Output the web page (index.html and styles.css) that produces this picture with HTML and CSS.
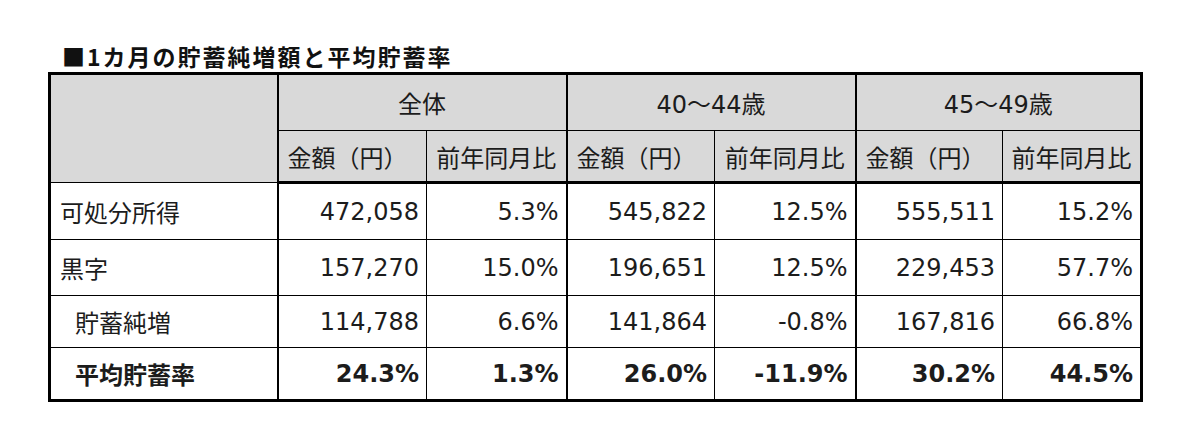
FILE: index.html
```html
<!DOCTYPE html>
<html lang="ja">
<head>
<meta charset="utf-8">
<title>1カ月の貯蓄純増額と平均貯蓄率</title>
<link rel="stylesheet" href="styles.css">
</head>
<body>
<div class="page">
  <h1 class="title">■1カ月の貯蓄純増額と平均貯蓄率</h1>
  <table class="stats">
    <colgroup>
      <col class="c-label">
      <col class="c-amt1"><col class="c-pct1">
      <col class="c-amt2"><col class="c-pct2">
      <col class="c-amt3"><col class="c-pct3">
    </colgroup>
    <thead>
      <tr class="hrow1">
        <th class="corner" rowspan="2"></th>
        <th class="grp" colspan="2">全体</th>
        <th class="grp" colspan="2">40～44歳</th>
        <th class="grp" colspan="2">45～49歳</th>
      </tr>
      <tr class="hrow2">
        <th class="amt grp-start">金額（円）</th>
        <th class="pct">前年同月比</th>
        <th class="amt grp-start">金額（円）</th>
        <th class="pct">前年同月比</th>
        <th class="amt grp-start">金額（円）</th>
        <th class="pct">前年同月比</th>
      </tr>
    </thead>
    <tbody>
      <tr class="r1">
        <th class="label">可処分所得</th>
        <td class="grp-start">472,058</td><td>5.3%</td>
        <td class="grp-start">545,822</td><td>12.5%</td>
        <td class="grp-start">555,511</td><td>15.2%</td>
      </tr>
      <tr class="r2">
        <th class="label">黒字</th>
        <td class="grp-start">157,270</td><td>15.0%</td>
        <td class="grp-start">196,651</td><td>12.5%</td>
        <td class="grp-start">229,453</td><td>57.7%</td>
      </tr>
      <tr class="r3">
        <th class="label sub">貯蓄純増</th>
        <td class="grp-start">114,788</td><td>6.6%</td>
        <td class="grp-start">141,864</td><td>-0.8%</td>
        <td class="grp-start">167,816</td><td>66.8%</td>
      </tr>
      <tr class="r4 total">
        <th class="label sub">平均貯蓄率</th>
        <td class="grp-start">24.3%</td><td>1.3%</td>
        <td class="grp-start">26.0%</td><td>-11.9%</td>
        <td class="grp-start">30.2%</td><td>44.5%</td>
      </tr>
    </tbody>
  </table>
</div>
</body>
</html>
```

FILE: styles.css
```css
html, body {
  margin: 0;
  padding: 0;
  background: #ffffff;
}

.page {
  padding: 43px 0 0 48px;
  font-family: "DejaVu Sans", "Noto Sans CJK JP", sans-serif;
  color: #1c1c1c;
}

.title {
  margin: 0 0 2px 14px;
  font-family: "Noto Sans CJK JP", sans-serif;
  font-size: 23px;
  line-height: 27px;
  font-weight: 700;
  letter-spacing: 2px;
  color: #111;
}

.stats {
  border-collapse: collapse;
  table-layout: fixed;
  width: 1095px;
  border: 3px solid #000;
  font-size: 24px;
}

.c-label { width: 228px; }
.c-amt1 { width: 149px; }
.c-pct1 { width: 140px; }
.c-amt2 { width: 148px; }
.c-pct2 { width: 141px; }
.c-amt3 { width: 147px; }
.c-pct3 { width: 139px; }

.stats th,
.stats td {
  border: 1px solid #000;
  padding: 0;
  white-space: nowrap;
  overflow: hidden;
}

.stats thead th {
  background: #d9d9d9;
  font-weight: 400;
  text-align: center;
}

.stats .grp,
.stats .corner {
  border-left: 2px solid #000;
  border-right: 2px solid #000;
}

.hrow1 th { height: 55px; }
.hrow2 th { height: 50px; border-bottom: 3px solid #000; }

.hrow2 .amt {
  text-align: left;
  padding-left: 9px;
}

.stats .grp-start { border-left: 2px solid #000; }

.stats tbody th.label {
  text-align: left;
  font-weight: 400;
  padding-left: 9px;
}

.stats tbody th.label.sub { padding-left: 24px; }

.stats tbody td {
  text-align: right;
  padding-right: 7px;
}

.r1 > * { height: 55px; }
.r2 > * { height: 55px; }
.r3 > * { height: 51px; }
.r4 > * {
  height: 51px;
  border-top: 4px double #000;
}

.stats tbody .total td,
.stats tbody .total th.label {
  font-weight: 700;
}
```
